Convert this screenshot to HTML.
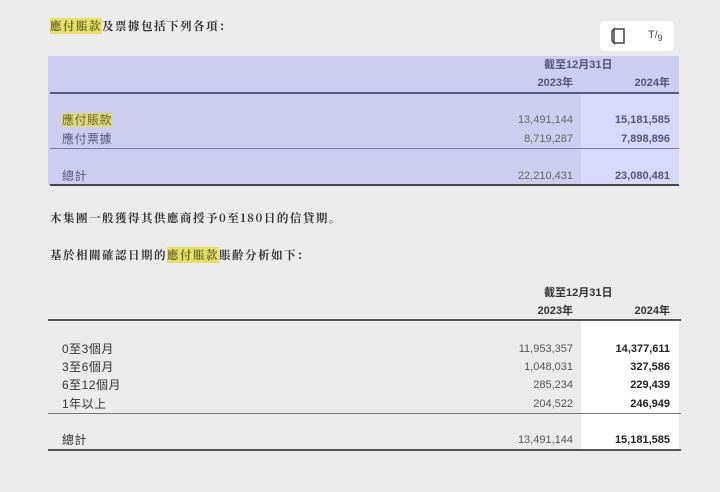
<!DOCTYPE html>
<html><head><meta charset="utf-8"><style>
*{margin:0;padding:0;box-sizing:border-box}
body{width:720px;height:492px;background:#ebebeb;position:relative;overflow:hidden;font-family:"Liberation Sans","Noto Sans CJK TC",sans-serif;color:#333}
.a{position:absolute;white-space:nowrap;font-size:11px;line-height:14px}
.p{font-size:11.5px;letter-spacing:1.5px;color:#333;font-weight:bold;font-family:"Noto Serif CJK SC","Liberation Serif",serif}
.hl{background:#e6e06a;color:#6a6a2a}
.r{text-align:right}
.b{font-weight:bold}
.ln{position:absolute;height:2px;background:#555}
.ln1{position:absolute;height:1px;background:#777}
.n{color:#555}
.pu{color:#55557a}
.lb{font-size:12px;letter-spacing:0.5px}
</style></head><body>
<div class="a p" style="left:50px;top:19px"><span class="hl">應付賬款</span>及票據包括下列各項：</div>

<div style="position:absolute;left:600px;top:21px;width:74px;height:30px;background:#fff;border-radius:5px"></div>
<svg style="position:absolute;left:610px;top:27px" width="16" height="18" viewBox="0 0 16 18"><path d="M4 2h10v14H4z M4 2v14l-2-2V4z" fill="none" stroke="#444" stroke-width="1.5"/></svg>
<div class="a" style="left:648px;top:28px;font-size:11px;color:#444">T<span style="font-size:10px">/</span><sub style="font-size:9px">9</sub></div>

<div style="position:absolute;left:48px;top:56px;width:631px;height:129px;background:#cdcdf0"></div>
<div style="position:absolute;left:581px;top:93px;width:98px;height:92px;background:#d8d8fb"></div>
<div class="ln" style="left:50px;top:92px;width:629px;background:#5a5a80"></div>
<div class="ln1" style="left:50px;top:148px;width:629px;background:#7a7aa0"></div>
<div class="ln" style="left:50px;top:184px;width:629px;background:#444"></div>
<div class="a b pu" style="left:544px;top:58px">截至12月31日</div>
<div class="a b pu r" style="left:500px;top:76px;width:73px">2023年</div>
<div class="a b pu r" style="left:590px;top:76px;width:80px">2024年</div>
<div class="a lb" style="left:62px;top:113px"><span class="hl" style="background:#dcd880">應付賬款</span></div>
<div class="a pu lb" style="left:62px;top:132px">應付票據</div>
<div class="a pu lb" style="left:62px;top:169px">總計</div>
<div class="a n r" style="left:480px;top:113px;width:93px;color:#666">13,491,144</div>
<div class="a n r" style="left:480px;top:132px;width:93px;color:#666">8,719,287</div>
<div class="a n r" style="left:480px;top:169px;width:93px;color:#666">22,210,431</div>
<div class="a b pu r" style="left:580px;top:113px;width:90px">15,181,585</div>
<div class="a b pu r" style="left:580px;top:132px;width:90px">7,898,896</div>
<div class="a b pu r" style="left:580px;top:169px;width:90px">23,080,481</div>

<div class="a p" style="left:50px;top:211px">木集團一般獲得其供應商授予0至180日的信貸期。</div>
<div class="a p" style="left:50px;top:248px">基於相關確認日期的<span class="hl">應付賬款</span>賬齡分析如下：</div>

<div style="position:absolute;left:581px;top:321px;width:98px;height:129px;background:#fff"></div>
<div class="ln" style="left:48px;top:319px;width:633px"></div>
<div class="ln1" style="left:48px;top:413px;width:633px"></div>
<div class="ln" style="left:48px;top:449px;width:633px"></div>
<div class="a b" style="left:544px;top:286px">截至12月31日</div>
<div class="a b r" style="left:500px;top:304px;width:73px">2023年</div>
<div class="a b r" style="left:590px;top:304px;width:80px">2024年</div>
<div class="a lb" style="left:62px;top:342px">0至3個月</div>
<div class="a lb" style="left:62px;top:360px">3至6個月</div>
<div class="a lb" style="left:62px;top:378px">6至12個月</div>
<div class="a lb" style="left:62px;top:397px">1年以上</div>
<div class="a lb" style="left:62px;top:433px">總計</div>
<div class="a n r" style="left:480px;top:342px;width:93px">11,953,357</div>
<div class="a n r" style="left:480px;top:360px;width:93px">1,048,031</div>
<div class="a n r" style="left:480px;top:378px;width:93px">285,234</div>
<div class="a n r" style="left:480px;top:397px;width:93px">204,522</div>
<div class="a n r" style="left:480px;top:433px;width:93px">13,491,144</div>
<div class="a b r" style="left:580px;top:342px;width:90px;color:#222">14,377,611</div>
<div class="a b r" style="left:580px;top:360px;width:90px;color:#222">327,586</div>
<div class="a b r" style="left:580px;top:378px;width:90px;color:#222">229,439</div>
<div class="a b r" style="left:580px;top:397px;width:90px;color:#222">246,949</div>
<div class="a b r" style="left:580px;top:433px;width:90px;color:#222">15,181,585</div>
</body></html>
